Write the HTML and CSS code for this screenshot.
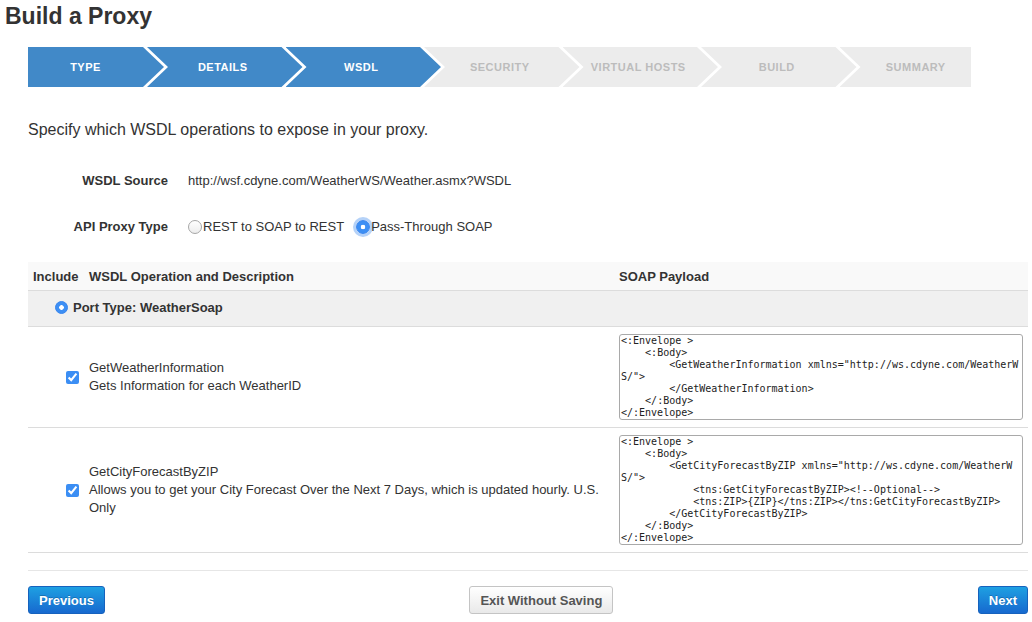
FILE: index.html
```html
<!DOCTYPE html>
<html lang="en">
<head>
<meta charset="utf-8">
<title>Build a Proxy</title>
<link rel="stylesheet" href="styles.css">
</head>
<body>
<h1 class="page-title">Build a Proxy</h1>
<main class="content">
  <ol class="wizard">
    <li class="step step-first done">Type</li>
    <li class="step done">Details</li>
    <li class="step done">WSDL</li>
    <li class="step">Security</li>
    <li class="step">Virtual Hosts</li>
    <li class="step">Build</li>
    <li class="step step-last">Summary</li>
  </ol>

  <p class="intro">Specify which WSDL operations to expose in your proxy.</p>

  <div class="form-grid">
    <div class="form-label">WSDL Source</div>
    <div class="form-value">http://wsf.cdyne.com/WeatherWS/Weather.asmx?WSDL</div>
    <div class="form-label">API Proxy Type</div>
    <div class="form-value radios">
      <label class="radio-label"><input type="radio" name="ptype" class="radio">REST to SOAP to REST</label>
      <label class="radio-label"><input type="radio" name="ptype" class="radio focused" checked>Pass-Through SOAP</label>
    </div>
  </div>

  <table class="ops">
    <colgroup>
      <col class="col-include">
      <col class="col-desc">
      <col class="col-payload">
    </colgroup>
    <thead>
      <tr>
        <th>Include</th>
        <th>WSDL Operation and Description</th>
        <th>SOAP Payload</th>
      </tr>
    </thead>
    <tbody>
      <tr class="port-row">
        <td colspan="3"><label class="port-label"><input type="radio" class="radio radio-sm" checked>Port Type: WeatherSoap</label></td>
      </tr>
      <tr class="op-row">
        <td class="include"><input type="checkbox" class="check" checked></td>
        <td class="desc">GetWeatherInformation<br>Gets Information for each WeatherID</td>
        <td class="payload"><textarea class="payload-box payload-sm" readonly spellcheck="false">&lt;:Envelope &gt;
    &lt;:Body&gt;
        &lt;GetWeatherInformation xmlns="http://ws.cdyne.com/WeatherWS/"&gt;
        &lt;/GetWeatherInformation&gt;
    &lt;/:Body&gt;
&lt;/:Envelope&gt;</textarea></td>
      </tr>
      <tr class="op-row">
        <td class="include"><input type="checkbox" class="check" checked></td>
        <td class="desc">GetCityForecastByZIP<br>Allows you to get your City Forecast Over the Next 7 Days, which is updated hourly. U.S. Only</td>
        <td class="payload"><textarea class="payload-box payload-lg" readonly spellcheck="false">&lt;:Envelope &gt;
    &lt;:Body&gt;
        &lt;GetCityForecastByZIP xmlns="http://ws.cdyne.com/WeatherWS/"&gt;
            &lt;tns:GetCityForecastByZIP&gt;&lt;!--Optional--&gt;
            &lt;tns:ZIP&gt;{ZIP}&lt;/tns:ZIP&gt;&lt;/tns:GetCityForecastByZIP&gt;
        &lt;/GetCityForecastByZIP&gt;
    &lt;/:Body&gt;
&lt;/:Envelope&gt;</textarea></td>
      </tr>
    </tbody>
  </table>

  <div class="actions">
    <button class="btn btn-primary" type="button">Previous</button>
    <button class="btn btn-default" type="button">Exit Without Saving</button>
    <button class="btn btn-primary" type="button">Next</button>
  </div>
</main>
</body>
</html>
```

FILE: styles.css
```css
html, body {
  margin: 0;
  padding: 0;
  background: #fff;
}

body {
  font-family: "Liberation Sans", Arial, Helvetica, sans-serif;
  font-size: 13px;
  color: #333;
}

.page-title {
  margin: 0;
  padding-left: 5px;
  font-size: 23px;
  line-height: 32px;
  font-weight: bold;
  color: #333;
}

.content {
  padding: 0 4px 0 28px;
}

/* Wizard */
.wizard {
  display: flex;
  width: 943px;
  height: 40px;
  margin: 15px 0 0;
  padding: 0;
  list-style: none;
}

.step {
  flex: none;
  box-sizing: border-box;
  width: 155.5px;
  margin-left: -17px;
  padding: 0 25px 0 21px;
  display: flex;
  align-items: center;
  justify-content: center;
  background: #ececec;
  color: #bcbcbc;
  font-size: 11px;
  font-weight: bold;
  letter-spacing: 0.5px;
  text-transform: uppercase;
  clip-path: polygon(0 0, calc(100% - 21px) 0, 100% 50%, calc(100% - 21px) 100%, 0 100%, 21px 50%);
}

.step-first {
  width: 136px;
  margin-left: 0;
  padding: 0 21px 0 0;
  clip-path: polygon(0 0, 115px 0, 136px 50%, 115px 100%, 0 100%);
}

.step-last {
  width: 131.5px;
  padding: 0 0 0 21px;
  clip-path: polygon(0 0, 100% 0, 100% 100%, 0 100%, 21px 50%);
}

.step.done {
  background: #4189c8;
  color: #fff;
}

/* Intro */
.intro {
  margin: 33px 0 0;
  font-size: 16px;
  line-height: 20px;
  color: #333;
}

/* Form */
.form-grid {
  display: grid;
  grid-template-columns: 140px auto;
  column-gap: 20px;
  row-gap: 26px;
  margin-top: 31px;
  line-height: 20px;
}

.form-label {
  text-align: right;
  font-weight: bold;
}

.radios {
  display: flex;
  align-items: center;
}

.radio-label {
  display: inline-flex;
  align-items: center;
  margin-right: 12px;
}

.radio {
  appearance: none;
  -webkit-appearance: none;
  box-sizing: border-box;
  width: 14px;
  height: 14px;
  margin: 0 1px 0 0;
  border: 1px solid #a6a6a6;
  border-radius: 50%;
  background: linear-gradient(#ffffff, #ededed);
  flex: none;
}

.radio:checked {
  border-color: #3a86ee;
  background: radial-gradient(circle, #fff 0 2px, #3d8ff4 2.6px);
}

.radio.focused {
  box-shadow: 0 0 0 3px rgba(90, 155, 240, 0.45);
}

.radio-sm {
  width: 13px;
  height: 13px;
  margin-right: 5px;
}

/* Table */
.ops {
  width: 1000px;
  margin-top: 25px;
  border-collapse: collapse;
  table-layout: fixed;
}

.col-include { width: 56px; }
.col-desc { width: 530px; }
.col-payload { width: 414px; }

.ops th {
  height: 28px;
  padding: 0 5px;
  text-align: left;
  font-weight: bold;
  background: #f9f9f9;
  border-bottom: 1px solid #dcdcdc;
}

.ops td {
  border-bottom: 1px solid #dcdcdc;
  vertical-align: middle;
}

.port-row td {
  height: 35px;
  padding: 0 0 0 27px;
  background: #f0f0f0;
  font-weight: bold;
}

.port-label {
  display: inline-flex;
  align-items: center;
}

.op-row td {
  padding: 7px 5px;
  line-height: 18px;
}

.op-row td.include {
  text-align: right;
}

.check {
  width: 13px;
  height: 13px;
  margin: 0;
  vertical-align: middle;
  accent-color: #3b8ef4;
}

.payload-box {
  display: block;
  box-sizing: border-box;
  width: 404px;
  margin: 0;
  padding: 0 1px;
  border: 1px solid #a9a9a9;
  border-radius: 3px;
  font-family: "DejaVu Sans Mono", "Liberation Mono", monospace;
  font-size: 10px;
  line-height: 12px;
  color: #222;
  background: #fff;
  resize: none;
  overflow: hidden;
  word-break: break-all;
}

.payload-sm { height: 86px; }
.payload-lg { height: 110px; }

/* Actions */
.actions {
  display: flex;
  justify-content: space-between;
  width: 1000px;
  margin-top: 17px;
  padding-top: 15px;
  border-top: 1px solid #e6e6e6;
}

.btn {
  box-sizing: border-box;
  height: 28px;
  padding: 0 10px;
  border-radius: 3px;
  font-family: "Liberation Sans", Arial, sans-serif;
  font-size: 13px;
  font-weight: bold;
  cursor: pointer;
}

.btn-primary {
  color: #fff;
  border: 1px solid #1662bd;
  background: linear-gradient(#1ea0e2, #1769cf);
  text-shadow: 0 -1px 0 rgba(0, 0, 0, 0.2);
}

.btn-default {
  color: #555;
  border: 1px solid #c4c4c4;
  background: linear-gradient(#ffffff, #e9e9e9);
}
```
